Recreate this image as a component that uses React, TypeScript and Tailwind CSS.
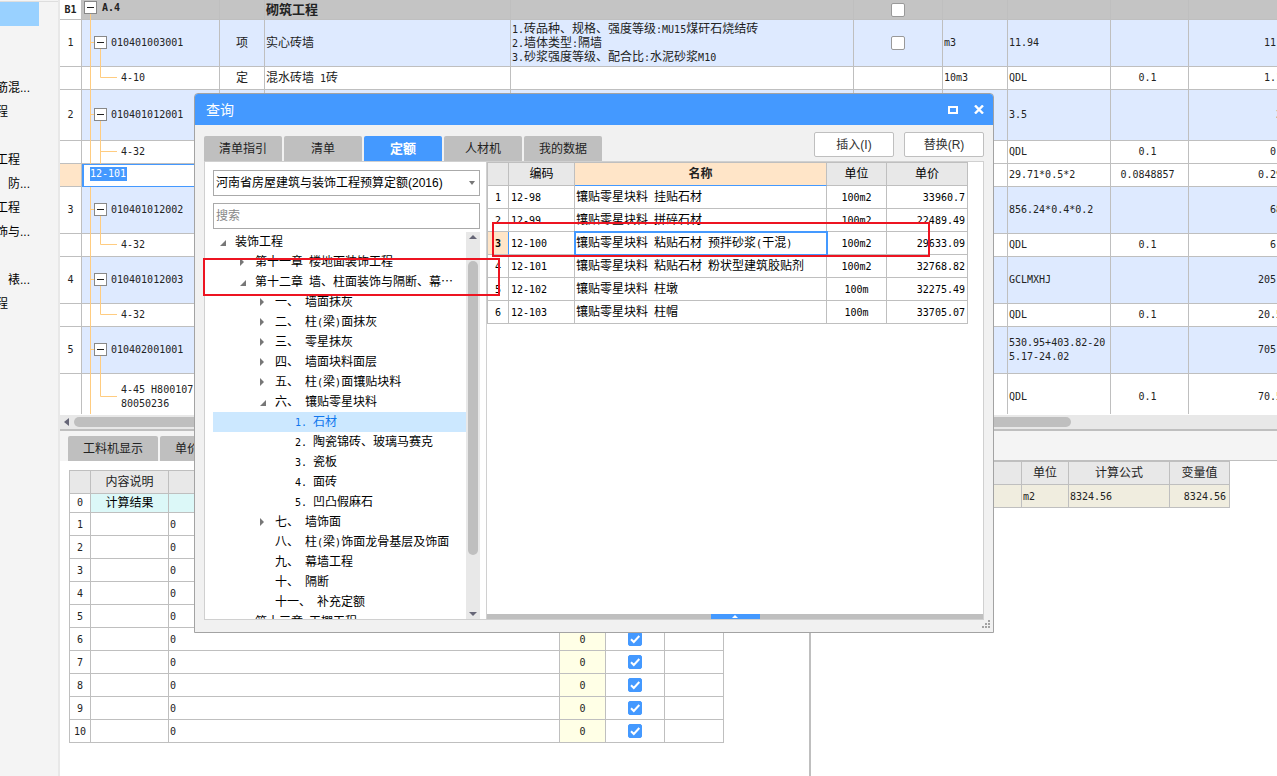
import { Fragment, useState } from "react";
import clsx from "clsx";

const FONT = 'font-["Liberation_Sans","Noto_Sans_CJK_SC",sans-serif]';
const MONO = 'font-["DejaVu_Sans_Mono","Noto_Sans_CJK_SC",monospace] text-[10px]';

// Latin runs are set half as wide as the Chinese characters around them
function Mixed({ text }: { text: string }) {
  return (
    <>
      {text.split(/([\x20-\x7e]+)/).map((part, i) =>
        i % 2 ? (
          <span key={i} className={clsx(MONO, "whitespace-pre-wrap leading-none")}>
            {part}
          </span>
        ) : (
          <Fragment key={i}>{part}</Fragment>
        )
      )}
    </>
  );
}

function Checkbox({ label, defaultChecked }: { label: string; defaultChecked?: boolean }) {
  return (
    <span className="relative mx-auto block size-[14px]">
      <input
        type="checkbox"
        aria-label={label}
        defaultChecked={defaultChecked}
        className="peer block size-[14px] appearance-none rounded-[2px] border border-[#999] bg-white checked:border-[#4499ff] checked:bg-[#4499ff]"
      />
      <svg
        viewBox="0 0 14 14"
        className="pointer-events-none absolute inset-0 hidden size-[14px] peer-checked:block"
      >
        <path d="M3 7.2 L5.8 10 L11.3 4" fill="none" stroke="white" strokeWidth="2" />
      </svg>
    </span>
  );
}

type Kind = "section" | "item" | "quota" | "editing";

interface BillRow {
  no: string;
  kind: Kind;
  height: number;
  code: string;
  type?: string;
  name?: string;
  desc?: string;
  unit?: string;
  formula?: string;
  rate?: string;
  amount?: string;
  continues?: boolean;
}

const billRows: BillRow[] = [
  { no: "B1", kind: "section", height: 20, code: "A.4", name: "砌筑工程" },
  {
    no: "1", kind: "item", height: 47, code: "010401003001", type: "项", name: "实心砖墙",
    desc: "1.砖品种、规格、强度等级:MU15煤矸石烧结砖\n2.墙体类型:隔墙\n3.砂浆强度等级、配合比:水泥砂浆M10",
    unit: "m3", formula: "11.94", amount: "11.94",
  },
  { no: "", kind: "quota", height: 23, code: "4-10", type: "定", name: "混水砖墙 1砖", unit: "10m3", formula: "QDL", rate: "0.1", amount: "1.194" },
  { no: "2", kind: "item", height: 51, code: "010401012001", formula: "3.5", amount: "3.5" },
  { no: "", kind: "quota", height: 23, code: "4-32", formula: "QDL", rate: "0.1", amount: "0.35", continues: true },
  { no: "", kind: "editing", height: 23, code: "12-101", formula: "29.71*0.5*2", rate: "0.0848857", amount: "0.2971" },
  { no: "3", kind: "item", height: 47, code: "010401012002", formula: "856.24*0.4*0.2", amount: "68.5" },
  { no: "", kind: "quota", height: 23, code: "4-32", formula: "QDL", rate: "0.1", amount: "6.85" },
  { no: "4", kind: "item", height: 47, code: "010401012003", formula: "GCLMXHJ", amount: "205.92" },
  { no: "", kind: "quota", height: 23, code: "4-32", formula: "QDL", rate: "0.1", amount: "20.592" },
  { no: "5", kind: "item", height: 47, code: "010402001001", formula: "530.95+403.82-20\n5.17-24.02", amount: "705.58" },
  { no: "", kind: "quota", height: 47, code: "4-45 H800107\n80050236", formula: "QDL", rate: "0.1", amount: "70.558" },
];

function Branches({ row }: { row: BillRow }) {
  const h = row.height;
  const mid = Math.floor(h / 2) - 0.5;
  return (
    <svg width="36" height={h} className="block shrink-0" fill="none" stroke="#ffcc80">
      {row.kind === "section" ? (
        <path d={`M8.5 12V${h}`} />
      ) : (
        <path d={`M8.5 0V${h}`} />
      )}
      {row.kind === "item" && <path d={`M9 ${mid}H13M18.5 ${mid}V${h}`} />}
      {row.kind === "quota" && <path d={`M18.5 0V${row.continues ? h : mid}M18.5 ${mid}H35`} />}
    </svg>
  );
}

function CollapseButton({ className, top }: { className: string; top: number }) {
  return (
    <button
      aria-label="折叠"
      style={{ top }}
      className={clsx("absolute flex size-[13px] items-center justify-center border border-[#888] bg-white", className)}
    >
      <span className="h-px w-[7px] bg-[#222]" />
    </button>
  );
}

function CodeCell({ row }: { row: BillRow }) {
  if (row.kind === "editing") {
    return (
      <td className="border-b border-l-2 border-t border-[#4499ff]! bg-white p-0 align-top">
        <input
          aria-label="编码"
          defaultValue={row.code}
          className={clsx(MONO, "ml-[6px] mt-[2px] block h-[14px] w-[37px] bg-[#4499ff] text-white outline-none")}
        />
      </td>
    );
  }
  return (
    <td className={clsx("border-b border-r p-0", MONO)}>
      <div className="relative flex items-center" style={{ height: row.height - 1 }}>
        <Branches row={row} />
        {row.kind === "section" && <CollapseButton className="left-[2px]" top={1} />}
        {row.kind === "item" && (
          <CollapseButton className="left-3" top={Math.floor((row.height - 14) / 2)} />
        )}
        <span
          className={clsx(
            "whitespace-pre-line leading-[14px]",
            row.kind === "section" && "-ml-4 -mt-1 font-bold",
            row.kind === "item" && "-ml-[7px]",
            row.kind === "quota" && "ml-[3px]"
          )}
        >
          {row.code}
        </span>
      </div>
    </td>
  );
}

const rowBg: Record<Kind, string> = {
  section: "bg-[#c4c4c4]",
  item: "bg-[#deeaff]",
  quota: "bg-white",
  editing: "bg-white",
};

function BillTable() {
  return (
    <table className="w-[1239px] table-fixed border-separate border-spacing-0 leading-[14px] text-[#222]">
      <colgroup>
        <col className="w-[22px]" />
        <col className="w-[138px]" />
        <col className="w-[45px]" />
        <col className="w-[246px]" />
        <col className="w-[343px]" />
        <col className="w-[89px]" />
        <col className="w-[65px]" />
        <col className="w-[103px]" />
        <col className="w-[78px]" />
        <col className="w-[110px]" />
      </colgroup>
      <tbody>
        {billRows.map((row, i) => (
          <tr
            key={i}
            className={clsx(rowBg[row.kind], "[&>td]:border-[#bfbfbf]")}
            style={{ height: row.height }}
          >
            <td
              className={clsx(
                "border-b border-r p-0 text-center",
                row.kind === "editing" ? "bg-[#ffe5c8]" : "bg-white",
                row.kind === "section" && "font-bold",
                MONO
              )}
            >
              {row.no}
            </td>
            <CodeCell row={row} />
            <td className="border-b border-r p-0 text-center">{row.type}</td>
            <td className={clsx("border-b border-r p-0 pl-px", row.kind === "section" && "text-[13px] font-bold")}>
              <Mixed text={row.name ?? ""} />
            </td>
            <td className="whitespace-pre-line border-b border-r p-0 pl-px">
              <Mixed text={row.desc ?? ""} />
            </td>
            <td className="border-b border-r p-0">
              {(row.kind === "section" || row.kind === "item") && <Checkbox label={`选择 ${row.code}`} />}
            </td>
            <td className={clsx("border-b border-r p-0 pl-px", MONO)}>{row.unit}</td>
            <td className={clsx("whitespace-pre-line border-b border-r p-0 pl-px", MONO)}>{row.formula}</td>
            <td className={clsx("border-b border-r p-0 pr-1 text-center", MONO)}>{row.rate}</td>
            <td className={clsx("border-b p-0 pr-[5px] text-right", MONO)}>{row.amount}</td>
          </tr>
        ))}
      </tbody>
    </table>
  );
}

function DetailTable() {
  return (
    <table className="w-[655px] table-fixed border-separate border-spacing-0 border-l border-t border-[#bfbfbf] text-[#222] [&_td]:border-b [&_td]:border-r [&_td]:border-[#bfbfbf] [&_td]:p-0 [&_th]:border-b [&_th]:border-r [&_th]:border-[#bfbfbf] [&_th]:bg-[#e8e8e8] [&_th]:p-0">
      <colgroup>
        <col className="w-[21px]" />
        <col className="w-[78px]" />
        <col />
        <col className="w-[46px]" />
        <col className="w-[59px]" />
        <col className="w-[59px]" />
      </colgroup>
      <thead>
        <tr className="h-[23px]">
          <th />
          <th className="font-normal">内容说明</th>
          <th />
          <th />
          <th />
          <th />
        </tr>
      </thead>
      <tbody>
        <tr className="h-[19px] text-center leading-[16px]">
          <td className={MONO}>0</td>
          <td className="bg-[#dcf8f8] text-black">计算结果</td>
          <td className="bg-[#dcf8f8]" />
          <td className="bg-[#dcf8f8]" />
          <td className="bg-[#dcf8f8]" />
          <td className="bg-[#dcf8f8]" />
        </tr>
        {Array.from({ length: 10 }, (_, i) => (
          <tr key={i} className={clsx("h-[23px]", MONO)}>
            <td className="text-center">{i + 1}</td>
            <td />
            <td>
              <span className="ml-px">0</span>
            </td>
            <td className="bg-[#ffffe6] text-center">0</td>
            <td>
              <Checkbox label={`第 ${i + 1} 行`} defaultChecked />
            </td>
            <td />
          </tr>
        ))}
      </tbody>
    </table>
  );
}

function VariableTable() {
  return (
    <table className="w-[419px] table-fixed border-separate border-spacing-0 border-t border-[#bfbfbf] text-[#222] [&_td]:border-b [&_td]:border-r [&_td]:border-[#bfbfbf] [&_td]:bg-[#f0eddf] [&_td]:px-px [&_th]:border-b [&_th]:border-r [&_th]:border-[#bfbfbf] [&_th]:bg-[#e8e8e8] [&_th]:font-normal">
      <colgroup>
        <col />
        <col className="w-[47px]" />
        <col className="w-[101px]" />
        <col className="w-[60px]" />
      </colgroup>
      <thead>
        <tr className="h-[23px]">
          <th />
          <th>单位</th>
          <th>计算公式</th>
          <th>变量值</th>
        </tr>
      </thead>
      <tbody>
        <tr className={clsx("h-[23px]", MONO)}>
          <td />
          <td>m2</td>
          <td>8324.56</td>
          <td className="text-right">
            <span className="mr-[2px]">8324.56</span>
          </td>
        </tr>
      </tbody>
    </table>
  );
}

type TreeNode = { depth: number; label: string; state?: "open" | "closed" };

const treeNodes: TreeNode[] = [
  { depth: 0, label: "装饰工程", state: "open" },
  { depth: 1, label: "第十一章 楼地面装饰工程", state: "closed" },
  { depth: 1, label: "第十二章 墙、柱面装饰与隔断、幕⋯", state: "open" },
  { depth: 2, label: "一、 墙面抹灰", state: "closed" },
  { depth: 2, label: "二、 柱(梁)面抹灰", state: "closed" },
  { depth: 2, label: "三、 零星抹灰", state: "closed" },
  { depth: 2, label: "四、 墙面块料面层", state: "closed" },
  { depth: 2, label: "五、 柱(梁)面镶贴块料", state: "closed" },
  { depth: 2, label: "六、 镶贴零星块料", state: "open" },
  { depth: 3, label: "1. 石材" },
  { depth: 3, label: "2. 陶瓷锦砖、玻璃马赛克" },
  { depth: 3, label: "3. 瓷板" },
  { depth: 3, label: "4. 面砖" },
  { depth: 3, label: "5. 凹凸假麻石" },
  { depth: 2, label: "七、 墙饰面", state: "closed" },
  { depth: 2, label: "八、 柱(梁)饰面龙骨基层及饰面" },
  { depth: 2, label: "九、 幕墙工程" },
  { depth: 2, label: "十、 隔断" },
  { depth: 2, label: "十一、 补充定额" },
  { depth: 1, label: "第十三章 天棚工程" },
];

const indent = ["pl-[7px]", "pl-[27px]", "pl-[47px]", "pl-[67px]"];

function QuotaTree() {
  const [selected, setSelected] = useState("1. 石材");
  return (
    <ul className="min-w-0 flex-1 overflow-hidden">
      {treeNodes.map((node) => (
        <li key={node.label}>
          <button
            onClick={() => setSelected(node.label)}
            className={clsx(
              "flex h-5 w-full items-center whitespace-nowrap leading-5",
              indent[node.depth],
              selected === node.label ? "bg-[#cce8ff] text-[#1177ee]" : "text-black"
            )}
          >
            <svg width="15" height="12" className="shrink-0" fill="#777">
              {node.state === "open" && <path d="M6 4V10H0Z" />}
              {node.state === "closed" && <path d="M0 2L4 6L0 10Z" />}
            </svg>
            <span>
              <Mixed text={node.label} />
            </span>
          </button>
        </li>
      ))}
    </ul>
  );
}

const quotas = [
  ["12-98", "镶贴零星块料 挂贴石材", "100m2", "33960.7"],
  ["12-99", "镶贴零星块料 拼碎石材", "100m2", "22489.49"],
  ["12-100", "镶贴零星块料 粘贴石材 预拌砂浆(干混)", "100m2", "29633.09"],
  ["12-101", "镶贴零星块料 粘贴石材 粉状型建筑胶贴剂", "100m2", "32768.82"],
  ["12-102", "镶贴零星块料 柱墩", "100m", "32275.49"],
  ["12-103", "镶贴零星块料 柱帽", "100m", "33705.07"],
];

function QuotaTable() {
  return (
    <table className="w-[481px] table-fixed border-separate border-spacing-0 border-l border-t border-[#bfbfbf] text-black [&_td]:border-b [&_td]:border-r [&_td]:border-[#bfbfbf] [&_td]:p-0 [&_th]:border-b [&_th]:border-r [&_th]:border-[#bfbfbf] [&_th]:p-0 [&_thead]:bg-[#e8e8e8]">
      <colgroup>
        <col className="w-[21px]" />
        <col className="w-[66px]" />
        <col />
        <col className="w-[60px]" />
        <col className="w-[81px]" />
      </colgroup>
      <thead>
        <tr className="h-[23px]">
          <th />
          <th className="font-normal">编码</th>
          <th className="border-b-[#4499ff]! bg-[#ffe5c8] font-bold text-[#222]">名称</th>
          <th className="font-normal">单位</th>
          <th className="font-normal">单价</th>
        </tr>
      </thead>
      <tbody>
        {quotas.map(([code, name, unit, price], i) => {
          const active = i === 2;
          return (
            <tr key={code} className="h-[23px]">
              <td className={clsx(MONO, "text-center", active && "border-r-[#4499ff]! bg-[#ffe5c8] font-bold")}>
                {i + 1}
              </td>
              <td className={MONO}>
                <span className="ml-[2px]">{code}</span>
              </td>
              <td className={clsx("whitespace-nowrap leading-[18px]", active && "outline-2 -outline-offset-1 outline-[#4499ff]")}>
                <span className="ml-px">
                  <Mixed text={name} />
                </span>
              </td>
              <td className={clsx(MONO, "text-center")}>{unit}</td>
              <td className={clsx(MONO, "text-right")}>
                <span className="mr-[2px]">{price}</span>
              </td>
            </tr>
          );
        })}
      </tbody>
    </table>
  );
}

const tabs = ["清单指引", "清单", "定额", "人材机", "我的数据"];

function QueryDialog() {
  const [tab, setTab] = useState("定额");
  return (
    <section
      role="dialog"
      aria-label="查询"
      className="absolute left-[194px] top-[93px] w-[800px] rounded-t border border-[#a3a3a3] bg-[#f1f1f1]"
    >
      <header className="flex h-[31px] items-center rounded-t-[3px] bg-[#4499ff] pl-[11px] pr-[9px] text-white">
        <h1 className="flex-1 pt-px text-[14px]">查询</h1>
        <button aria-label="最大化" className="mr-4">
          <svg width="10" height="8" fill="none" stroke="white" strokeWidth="2">
            <path d="M1 1H9V7H1Z" />
          </svg>
        </button>
        <button aria-label="关闭">
          <svg width="10" height="9" fill="none" stroke="white" strokeWidth="2.4">
            <path d="M1 .5L9 8.5M9 .5L1 8.5" />
          </svg>
        </button>
      </header>

      <div className="flex items-end px-[9px] pt-[7px]">
        <div role="tablist" className="flex flex-1 gap-[2px]">
          {tabs.map((name) => (
            <button
              key={name}
              role="tab"
              aria-selected={tab === name}
              onClick={() => setTab(name)}
              className={clsx(
                "h-[25px] w-[78px] rounded-t-[2px]",
                tab === name ? "bg-[#4499ff] text-[13px] font-bold text-white" : "bg-[#bfbfbf] text-[#222]"
              )}
            >
              {name}
            </button>
          ))}
        </div>
        <div className="mb-1 flex gap-[10px]">
          <button className="h-[25px] w-20 rounded-[2px] border border-[#bfbfbf] bg-white text-[#333]">插入(I)</button>
          <button className="h-[25px] w-20 rounded-[2px] border border-[#bfbfbf] bg-white text-[#333]">替换(R)</button>
        </div>
      </div>

      <div className="mx-[9px] flex h-[459px] border border-[#d0d0d0] bg-white">
        <div className="flex w-[282px] flex-col border-r border-[#d0d0d0] pl-2 pr-[6px] pt-2">
          <div className="relative">
            <select
              aria-label="定额库"
              className="block h-[26px] w-full appearance-none border border-[#aaa] bg-white pl-[2px] text-black outline-none"
            >
              <option>河南省房屋建筑与装饰工程预算定额(2016)</option>
            </select>
            <svg width="6" height="4" className="pointer-events-none absolute right-[5px] top-[11px]" fill="#777">
              <path d="M0 0H6L3 4Z" />
            </svg>
          </div>
          <input
            aria-label="搜索"
            placeholder="搜索"
            className="mt-[7px] h-[26px] w-full shrink-0 border border-[#aaa] bg-white pl-[2px] outline-none placeholder:text-[#888]"
          />
          <div className="mt-[3px] flex min-h-0 flex-1">
            <QuotaTree />
            <div className="flex w-[14px] flex-col items-center bg-[#e8e8e8] py-[3px]">
              <svg width="8" height="4" fill="#667">
                <path d="M0 4H8L4 0Z" />
              </svg>
              <div className="mt-[22px] h-[294px] w-[10px] rounded-full bg-[#bfbfbf]" />
              <svg width="8" height="4" className="mt-auto" fill="#667">
                <path d="M0 0H8L4 4Z" />
              </svg>
            </div>
          </div>
        </div>
        <div className="flex min-w-0 flex-1 flex-col">
          <QuotaTable />
          <div className="mt-auto flex h-[5px] justify-center bg-[#bfbfbf]">
            <button aria-label="展开" className="flex w-[49px] items-center justify-center bg-[#4499ff]">
              <svg width="6" height="3" fill="white">
                <path d="M0 3H6L3 0Z" />
              </svg>
            </button>
          </div>
        </div>
      </div>

      <footer className="flex h-3 justify-end pr-[3px]">
        <svg width="8" height="8" fill="#a3a3a3">
          <path d="M6 0h2v2H6zM3 3h2v2H3zM6 3h2v2H6zM0 6h2v2H0zM3 6h2v2H3zM6 6h2v2H6z" />
        </svg>
      </footer>
    </section>
  );
}

const outline = ["筋混...", "程", "", "工程", "\u3000防...", "工程", "饰与...", "", "\u3000裱...", "程"];

export default function App() {
  return (
    <div className={clsx("relative flex h-screen overflow-hidden bg-white text-[12px]", FONT)}>
      <aside className="w-[60px] shrink-0 overflow-hidden border-r-2 border-[#e8e8e8] bg-[#f4f4f4] text-black">
        <div className="h-[2px] border-b border-[#dedede]" />
        <div className="h-6 w-[39px] bg-[#99d1ff]" />
        <ul className="-ml-1 mt-[50px] leading-6">
          {outline.map((label, i) => (
            <li key={i} className="h-6 whitespace-nowrap">
              {label}
            </li>
          ))}
        </ul>
      </aside>

      <main className="flex min-w-0 flex-1 flex-col">
        <div className="h-[414px] shrink-0 overflow-hidden">
          <BillTable />
        </div>
        <div className="mt-px flex h-[14px] shrink-0 items-center bg-[#e8e8e8] pl-1">
          <svg width="5" height="8" fill="#667">
            <path d="M5 0V8L0 4Z" />
          </svg>
          <div className="ml-[5px] h-[10px] w-[997px] rounded-full bg-[#bfbfbf]" />
        </div>
        <div className="flex min-h-0 flex-1 border-t-2 border-[#bfbfbf]">
          <div className="w-[751px] shrink-0 overflow-hidden border-r-2 border-[#bfbfbf]">
            <div className="flex h-[30px] items-end gap-[2px] bg-[#f4f4f4] pl-2">
              <button className="h-[25px] rounded-t-[2px] bg-[#bfbfbf] px-[15px] text-[#222]">工料机显示</button>
              <button className="h-[25px] rounded-t-[2px] bg-[#bfbfbf] px-[15px] text-[#222]">单价构成</button>
            </div>
            <div className="pl-[9px] pt-[9px]">
              <DetailTable />
            </div>
          </div>
          <div className="min-w-0 flex-1">
            <div className="h-[29px] bg-[#f4f4f4]" />
            <div className="border-t border-[#bfbfbf]">
              <VariableTable />
            </div>
          </div>
        </div>
      </main>

      <QueryDialog />

      {/* callouts */}
      <div className="pointer-events-none absolute left-[203px] top-[258px] h-[38px] w-[297px] border-2 border-[#ed1421]" />
      <div className="pointer-events-none absolute left-[492px] top-[222px] h-[35px] w-[438px] border-2 border-[#ed1421]" />
    </div>
  );
}
